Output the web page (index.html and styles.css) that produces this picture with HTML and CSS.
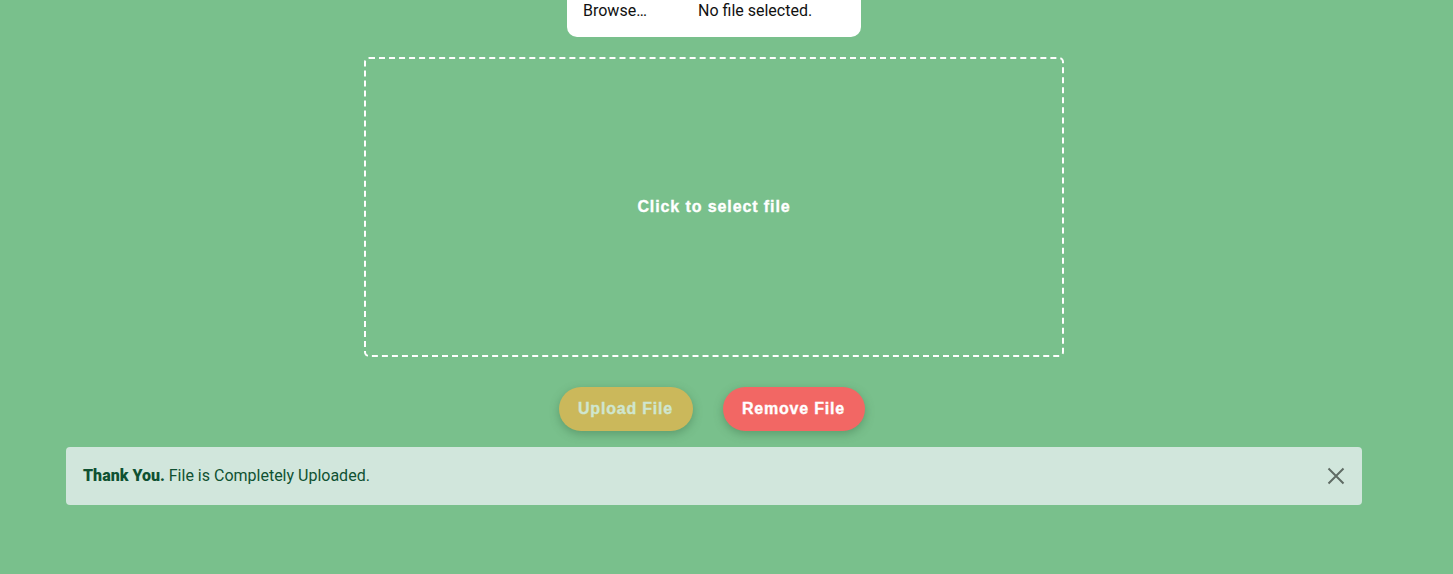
FILE: index.html
```html
<!DOCTYPE html>
<html>
<head>
<meta charset="utf-8">
<link rel="stylesheet" href="styles.css">
</head>
<body>
<div class="page">
  <div class="file-box">
    <span class="browse">Browse…</span>
    <span class="nofile">No file selected.</span>
  </div>
  <div class="drop-zone">
    <span class="drop-text">Click to select file</span>
  </div>
  <div class="actions">
    <button class="btn btn-upload">Upload File</button>
    <button class="btn btn-remove">Remove File</button>
  </div>
  <div class="alert">
    <span class="alert-text"><strong>Thank You.</strong> File is Completely Uploaded.</span>
    <span class="close">
      <svg width="18" height="18" viewBox="0 0 18 18"><path d="M1.5 1.5 L16.5 16.5 M16.5 1.5 L1.5 16.5" stroke="#5f6b64" stroke-width="2" fill="none"/></svg>
    </span>
  </div>
</div>
</body>
</html>
```

FILE: styles.css
```css
html, body {
  margin: 0;
  padding: 0;
  background: #79c08c;
  height: 100%;
}
.page {
  width: 1428px;
  display: flex;
  flex-direction: column;
  align-items: center;
  font-family: Roboto, "Liberation Sans", sans-serif;
}
.file-box {
  width: 294px;
  height: 37px;
  box-sizing: border-box;
  background: #fff;
  border-radius: 0 0 10px 10px;
  display: flex;
  align-items: flex-start;
  padding-left: 16px;
  font-size: 16px;
  line-height: 22px;
  color: #111;
}
.browse {
  width: 115px;
}
.drop-zone {
  margin-top: 20px;
  width: 700px;
  height: 300px;
  box-sizing: border-box;
  border: 2px dashed #fff;
  border-radius: 5px;
  display: flex;
  align-items: center;
  justify-content: center;
}
.drop-text {
  color: #fff;
  font-family: "Liberation Sans", Arial, sans-serif;
  font-weight: 700;
  font-size: 16px;
  letter-spacing: 0.9px;
  -webkit-text-stroke: 0.35px currentColor;
  margin-top: -1px;
}
.actions {
  margin-top: 30px;
  display: flex;
  gap: 30px;
  margin-left: -5px;
}
.btn {
  height: 44px;
  border: none;
  border-radius: 22px;
  padding: 0;
  font-family: "Liberation Sans", Arial, sans-serif;
  font-weight: 700;
  font-size: 16px;
  letter-spacing: 0.8px;
  -webkit-text-stroke: 0.35px currentColor;
  box-shadow: 0 3px 10px rgba(60, 110, 70, 0.45);
}
.btn-upload {
  background: #cbb85b;
  color: #cfe6cf;
  width: 134px;
}
.btn-remove {
  background: #f26764;
  color: #fff;
  width: 142px;
}
.alert {
  margin-top: 16px;
  width: 1296px;
  height: 58px;
  box-sizing: border-box;
  background: #d1e6dc;
  border-radius: 4px;
  color: #0f5132;
  font-size: 16px;
  display: flex;
  align-items: center;
  justify-content: space-between;
  padding: 0 16px 2px 17px;
}
.alert-text strong {
  font-weight: 900;
}
.close {
  display: flex;
  margin-right: 1px;
  margin-top: 2px;
}
```
